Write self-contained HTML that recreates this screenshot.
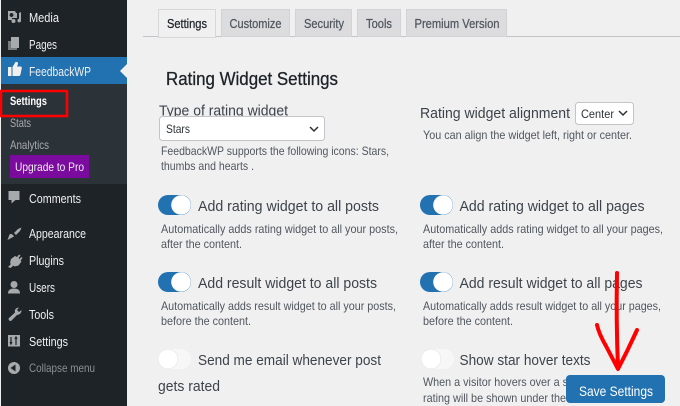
<!DOCTYPE html>
<html><head><meta charset="utf-8"><style>
html,body{margin:0;padding:0;background:#f0f0f1;width:680px;height:406px;overflow:hidden}
svg{display:block}
text{font-family:"Liberation Sans",sans-serif}
.m{fill:#f0f0f1;font-size:13px}
.h{fill:#50575e;font-size:12px}
.l{fill:#3c434a;font-size:15px}
.t{fill:#50575e;font-size:13px;stroke:#50575e;stroke-width:.25px}
.i{fill:#a7aaad}
</style></head><body>
<svg width="680" height="406" viewBox="0 0 680 406" xmlns="http://www.w3.org/2000/svg">
<rect width="680" height="406" fill="#f0f0f1"/>
<!-- sidebar -->
<rect x="1" width="126" height="406" fill="#1d2327"/>
<rect x="1" y="84" width="126" height="100" fill="#2c3338"/>
<rect x="1" y="57" width="126" height="27" fill="#2271b1"/>
<path d="M127 64L120 71L127 78Z" fill="#f0f0f1"/>
<!-- icons -->
<path class="i" d="M8 11h7l1 2h1v5h-5v2h-4zM11.500 13a2 2 0 1 0 .01 0z" fill-rule="evenodd"/>
<path class="i" d="M19 13l2-1v8.500a1.800 1.800 0 1 1-2-1.700z"/>
<circle class="i" cx="13.500" cy="21" r="2"/>
<path class="i" d="M8 41h9v9H8z" opacity=".65"/>
<path class="i" d="M11 37h8v11h-8z"/>
<path d="M8 67h3.500v9H8zM12.500 67l3-5q2.500-.5 2.500 2l-1 2.500h3.500q1.500 0 1.200 2l-1.200 6q-.4 1.500-2 1.500h-6z" fill="#f0f0f1"/>
<path class="i" d="M8.500 191h11v9h-4l-4 3.500V200h-3z"/>
<path class="i" d="M14 233l4-4 3.500-1.500-1.500 3.500-4 4zM7.500 240l2-5.500q2.500-1.500 4.500 2z"/>
<path class="i" d="M8 267l3-3-1-1 1-4 4-3 2 1 2-2.500 1.500 1-2 2.500 1 1 2-2 1 1-2 2.500 1 1-3 4-4 1-1-1-3 2.500z"/>
<circle class="i" cx="14" cy="284.500" r="3.500"/>
<path class="i" d="M8 293.500q0-5 6-5t6 5z"/>
<path class="i" d="M8.500 318.500l6.500-6q-1-4.500 4-5l-2 2.500 2 2 2.500-2q0 4.500-4.500 5l-6 6q-2.500 0-2.500-2.500z"/>
<rect class="i" x="8" y="335" width="12" height="11.500"/>
<path d="M11 337v7M10 342l1 2 1-2M16 345v-8M15 339l1-2 1 2" stroke="#1d2327" fill="none" stroke-width="1.200"/>
<circle class="i" cx="14" cy="368" r="6"/>
<path d="M10.500 368l5-3.500v7z" fill="#1d2327"/>
<!-- menu text -->
<text class="m" lengthAdjust="spacingAndGlyphs" x="29" y="22" textLength="30">Media</text>
<text class="m" lengthAdjust="spacingAndGlyphs" x="29" y="49" textLength="28">Pages</text>
<text class="m" lengthAdjust="spacingAndGlyphs" x="29" y="76" textLength="62">FeedbackWP</text>
<text lengthAdjust="spacingAndGlyphs" x="10" y="105" textLength="37" font-size="12" font-weight="bold" fill="#fff">Settings</text>
<text lengthAdjust="spacingAndGlyphs" x="10" y="127" textLength="21" font-size="12" fill="#a7aaad">Stats</text>
<text lengthAdjust="spacingAndGlyphs" x="10" y="149" textLength="39" font-size="12" fill="#a7aaad">Analytics</text>
<rect x="10" y="155" width="79" height="23" fill="#7b0a9f"/>
<text lengthAdjust="spacingAndGlyphs" x="15" y="171" textLength="69" font-size="12" fill="#f0f0f1">Upgrade to Pro</text>
<text class="m" lengthAdjust="spacingAndGlyphs" x="29" y="203" textLength="52">Comments</text>
<text class="m" lengthAdjust="spacingAndGlyphs" x="29" y="238" textLength="57">Appearance</text>
<text class="m" lengthAdjust="spacingAndGlyphs" x="29" y="265" textLength="35">Plugins</text>
<text class="m" lengthAdjust="spacingAndGlyphs" x="29" y="292" textLength="26">Users</text>
<text class="m" lengthAdjust="spacingAndGlyphs" x="29" y="319" textLength="25">Tools</text>
<text class="m" lengthAdjust="spacingAndGlyphs" x="29" y="346" textLength="39">Settings</text>
<text lengthAdjust="spacingAndGlyphs" x="29" y="372" textLength="66" font-size="12" fill="#8c8f94">Collapse menu</text>
<rect x="1" y="91" width="66" height="25" fill="none" stroke="#f00" stroke-width="2.500"/>
<!-- tabs -->
<path d="M143 36.500H680" stroke="#c3c4c7"/>
<rect x="158.500" y="9.500" width="57" height="28" fill="#f0f0f1" stroke="#d8d8da"/>
<g fill="#dcdcde" stroke="#d3d3d6">
<rect x="221.500" y="9.500" width="68" height="27"/>
<rect x="295.500" y="9.500" width="56" height="27"/>
<rect x="357.500" y="9.500" width="43" height="27"/>
<rect x="406.500" y="9.500" width="100" height="27"/>
</g>
<text class="t" lengthAdjust="spacingAndGlyphs" x="167" y="28" textLength="40" style="fill:#1d2327;stroke:#1d2327">Settings</text>
<text class="t" lengthAdjust="spacingAndGlyphs" x="229.500" y="28" textLength="52">Customize</text>
<text class="t" lengthAdjust="spacingAndGlyphs" x="304" y="28" textLength="40">Security</text>
<text class="t" lengthAdjust="spacingAndGlyphs" x="366" y="28" textLength="26">Tools</text>
<text class="t" lengthAdjust="spacingAndGlyphs" x="414.500" y="28" textLength="85">Premium Version</text>
<text lengthAdjust="spacingAndGlyphs" x="166" y="85" textLength="172" font-size="18" fill="#1d2327" stroke="#1d2327" stroke-width=".3">Rating Widget Settings</text>
<!-- left -->
<text class="l" lengthAdjust="spacingAndGlyphs" x="159" y="115.500" textLength="129">Type of rating widget</text>
<rect x="159.500" y="116.500" width="165" height="24" rx="3" fill="#fff" stroke="#c3c4c7"/>
<text lengthAdjust="spacingAndGlyphs" x="166" y="133" textLength="24" font-size="12" fill="#2c3338">Stars</text>
<path d="M310 127l4 4 4-4" fill="none" stroke="#2c3338" stroke-width="1.500"/>
<text class="h" lengthAdjust="spacingAndGlyphs" x="161" y="155" textLength="228">FeedbackWP supports the following icons: Stars,</text>
<text class="h" lengthAdjust="spacingAndGlyphs" x="161" y="170" textLength="93">thumbs and hearts .</text>
<!-- right -->
<text class="l" lengthAdjust="spacingAndGlyphs" x="420" y="118" textLength="150">Rating widget alignment</text>
<rect x="575.500" y="102.500" width="58" height="22" rx="3" fill="#fff" stroke="#c3c4c7"/>
<text lengthAdjust="spacingAndGlyphs" x="581" y="118" textLength="33" font-size="12" fill="#2c3338">Center</text>
<path d="M619 111l4 4 4-4" fill="none" stroke="#2c3338" stroke-width="1.500"/>
<text class="h" lengthAdjust="spacingAndGlyphs" x="423" y="139" textLength="209">You can align the widget left, right or center.</text>
<!-- toggles left -->
<rect x="158" y="195" width="33" height="20" rx="10" fill="#2271b1"/><circle cx="181" cy="205" r="9.800" fill="#fff"/>
<text class="l" lengthAdjust="spacingAndGlyphs" x="198" y="211" textLength="181">Add rating widget to all posts</text>
<text class="h" lengthAdjust="spacingAndGlyphs" x="161" y="233" textLength="237">Automatically adds rating widget to all your posts,</text>
<text class="h" lengthAdjust="spacingAndGlyphs" x="161" y="248" textLength="81">after the content.</text>
<rect x="158" y="272" width="33" height="20" rx="10" fill="#2271b1"/><circle cx="181" cy="282" r="9.800" fill="#fff"/>
<text class="l" lengthAdjust="spacingAndGlyphs" x="198" y="288" textLength="179">Add result widget to all posts</text>
<text class="h" lengthAdjust="spacingAndGlyphs" x="161" y="310" textLength="235">Automatically adds result widget to all your posts,</text>
<text class="h" lengthAdjust="spacingAndGlyphs" x="161" y="325" textLength="90">before the content.</text>
<rect x="158" y="349" width="33" height="20" rx="10" fill="#f7f7f7"/><circle cx="168" cy="359" r="9.800" fill="#fff" stroke="#e6e6e6" stroke-width=".6"/>
<text class="l" lengthAdjust="spacingAndGlyphs" x="198" y="365" textLength="183">Send me email whenever post</text>
<text class="l" lengthAdjust="spacingAndGlyphs" x="158" y="391" textLength="62">gets rated</text>
<!-- toggles right -->
<rect x="420" y="195" width="33" height="20" rx="10" fill="#2271b1"/><circle cx="443" cy="205" r="9.800" fill="#fff"/>
<text class="l" lengthAdjust="spacingAndGlyphs" x="459.500" y="211" textLength="185">Add rating widget to all pages</text>
<text class="h" lengthAdjust="spacingAndGlyphs" x="423" y="233" textLength="240">Automatically adds rating widget to all your pages,</text>
<text class="h" lengthAdjust="spacingAndGlyphs" x="423" y="248" textLength="81">after the content.</text>
<rect x="420" y="272" width="33" height="20" rx="10" fill="#2271b1"/><circle cx="443" cy="282" r="9.800" fill="#fff"/>
<text class="l" lengthAdjust="spacingAndGlyphs" x="459.500" y="288" textLength="183">Add result widget to all pages</text>
<text class="h" lengthAdjust="spacingAndGlyphs" x="423" y="310" textLength="238">Automatically adds result widget to all your pages,</text>
<text class="h" lengthAdjust="spacingAndGlyphs" x="423" y="325" textLength="90">before the content.</text>
<rect x="421" y="349" width="33" height="20" rx="10" fill="#f7f7f7"/><circle cx="431" cy="359" r="9.800" fill="#fff" stroke="#e6e6e6" stroke-width=".6"/>
<text class="l" lengthAdjust="spacingAndGlyphs" x="459.500" y="365" textLength="131">Show star hover texts</text>
<text class="h" lengthAdjust="spacingAndGlyphs" x="423" y="386" textLength="178">When a visitor hovers over a star, the</text>
<text class="h" lengthAdjust="spacingAndGlyphs" x="423" y="402" textLength="143">rating will be shown under the</text>
<!-- button -->
<rect x="566" y="375" width="99" height="28" rx="4" fill="#2271b1"/>
<text lengthAdjust="spacingAndGlyphs" x="579" y="396" textLength="74" font-size="14" fill="#fff">Save Settings</text>
<!-- arrow -->
<path d="M617 273Q616 320 618 368" stroke="#f00" stroke-width="4" fill="none" stroke-linecap="round"/>
<path d="M597 325Q599 334 606 346L618 369Q628 350 637 330" stroke="#f00" stroke-width="4" fill="none" stroke-linecap="round" stroke-linejoin="round"/>
</svg>
</body></html>
